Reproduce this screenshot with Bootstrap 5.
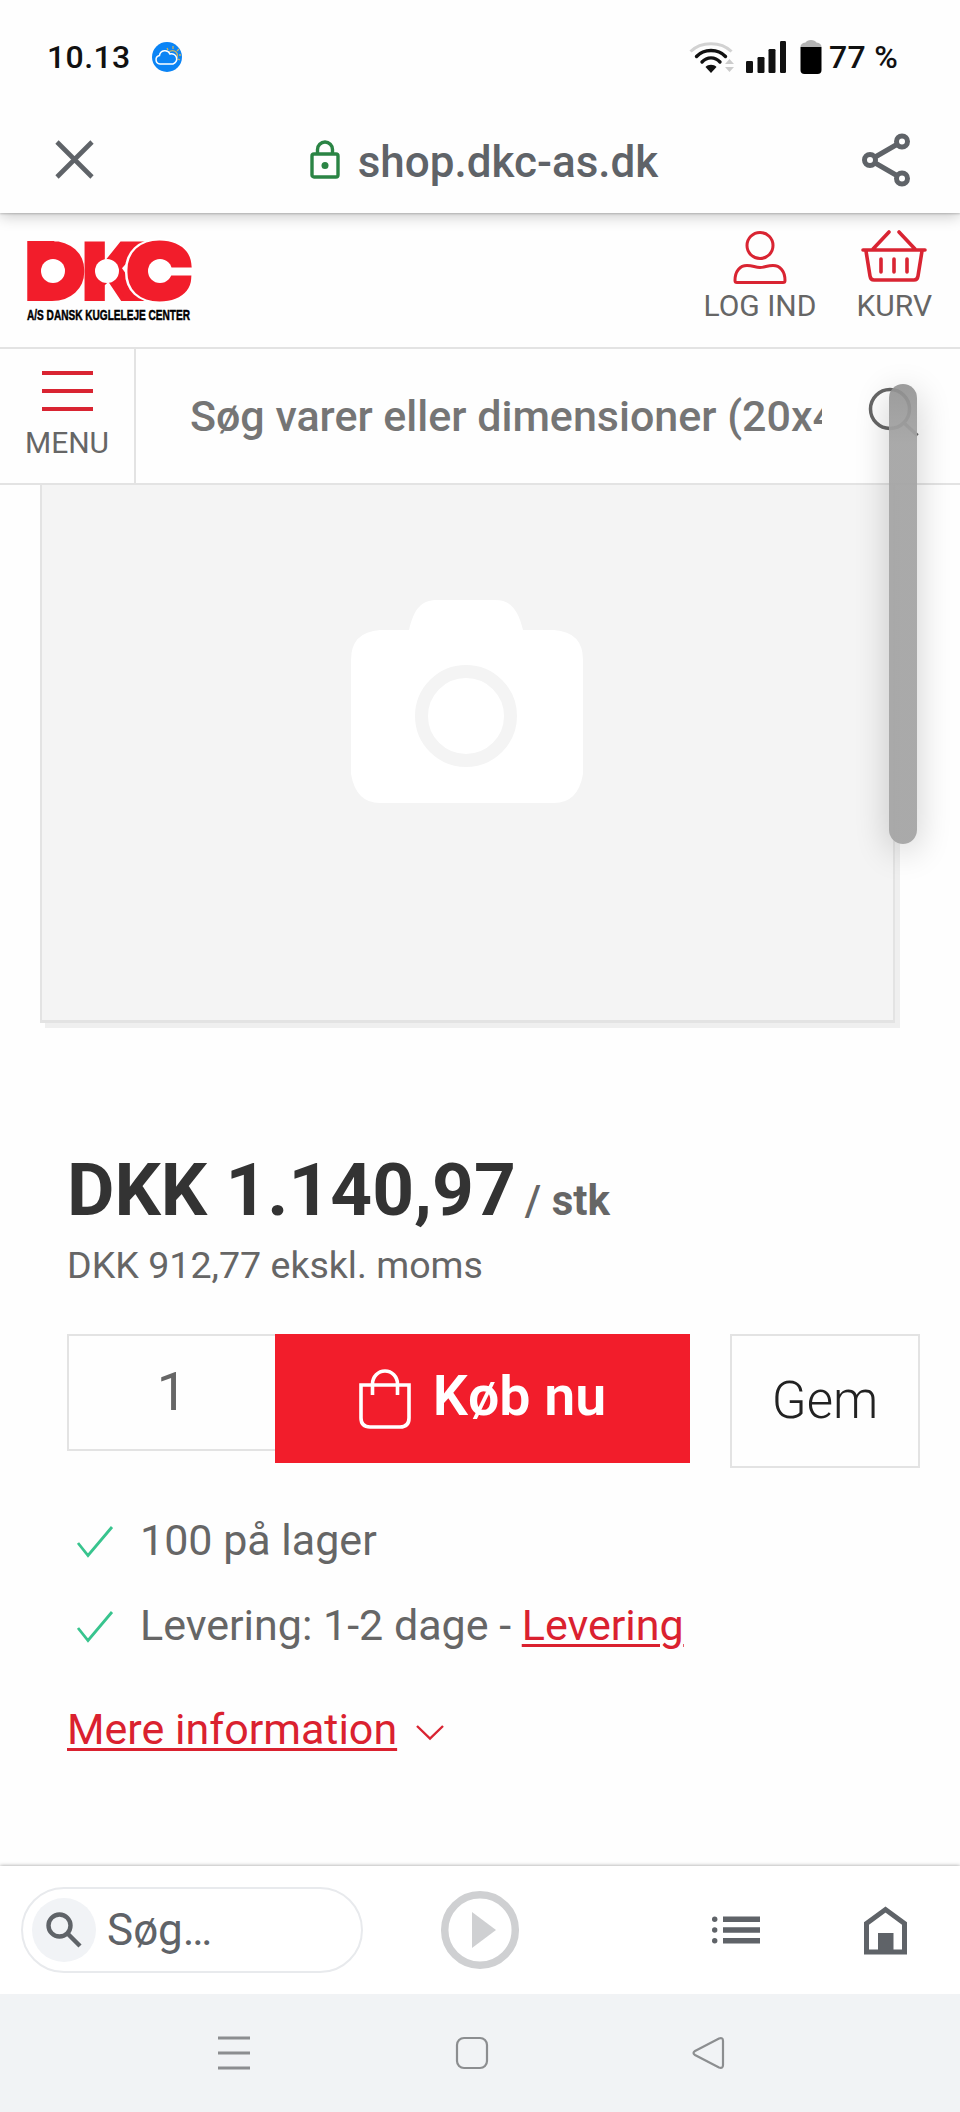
<!DOCTYPE html>
<html lang="da">
<head>
<meta charset="utf-8">
<meta name="viewport" content="width=device-width, initial-scale=1">
<title>shop.dkc-as.dk</title>
<link href="https://cdn.jsdelivr.net/npm/bootstrap@5.3.0/dist/css/bootstrap.min.css" rel="stylesheet">
<style>
body{font-family:Roboto,"Liberation Sans",sans-serif;line-height:1;color:#666;background:#fefefe}
.screen{width:960px;height:2112px}
svg{display:block;flex:none;overflow:visible}
.status{height:114px;padding:0 62px 0 47px;font-size:32px;font-weight:500;color:#111;background:#fefefe;z-index:4}
.clock{letter-spacing:.4px;width:105px}
.percent{margin-left:7px;letter-spacing:.3px}
.addr{height:99px;padding:0 49px 7px 55px;box-shadow:0 1px 2px rgba(0,0,0,.2),0 3px 14px rgba(0,0,0,.22);background:#fefefe;z-index:2}
.site{margin-left:12px}
.host{font-size:44px;font-weight:500;color:#5f6368;padding-top:4px;margin-left:18px}
.shop-head{height:136px;border-bottom:2px solid #e3e3e3;padding:0 28px 0 25px}
.act{font-size:30px;color:#666}
.act-top{padding-top:17px}
.act-top span{margin-top:7px;line-height:30px}
.find{height:136px;border-bottom:2px solid #e3e3e3}
.menu-cell{width:136px;border-right:2px solid #e3e3e3;padding-top:22px}
.bars{width:51px;height:40px;border-top:4px solid #d92432;border-bottom:4px solid #d92432;padding:14px 0}
.bars i{display:block;height:4px;background:#d92432}
.query{margin-left:54px;width:632px;height:54px;line-height:54px;font-size:43px;font-weight:500;color:#757575}
.photo{width:855px;height:538px;margin-left:40px;background:#f4f4f4;border:solid #e3e3e3;border-width:0 2px 3px;box-shadow:5px 5px 0 #efefef}
.info{padding:131px 39px 0 67px}
.price{font-size:73px;font-weight:700;color:#333}
.unit{font-size:42px;font-weight:500;color:#666;margin-left:9px}
.net{font-size:37.6px;margin-top:20px}
.buy{margin-top:49px;height:134px}
.qty{width:208px;height:117px;border:2px solid #e3e3e3;border-right:0;font-size:54px}
.kob{width:415px;height:129px;background:#f21d2b;color:#fff;font-size:55.5px;font-weight:600;border-radius:0}
.gem{width:190px;height:134px;border:2px solid #e3e3e3;font-size:51px;font-weight:300;color:#222;margin-left:40px}
.fact{font-size:43px;height:43px}
.tick{margin:3px 27px 0 10px}
.red-link{color:#da212f;text-decoration:underline;text-decoration-thickness:3px;text-underline-offset:4px}
.tools{height:128px;box-shadow:0 0 4px rgba(0,0,0,.4);background:#fff;padding:0 53px 0 21px}
.pill{width:342px;height:86px;border:2px solid #e8eaed;padding-left:9px;font-size:44px;color:#5f6368}
.lens{width:64px;height:64px;background:#f1f3f6}
.keys{height:118px;background:#f1f3f5}
.thumb-bar{position:absolute;left:889px;top:384px;width:28px;height:460px;border-radius:14px;background:linear-gradient(rgba(145,145,145,.9),rgba(165,165,165,.95) 60px);box-shadow:0 8px 34px rgba(0,0,0,.2);z-index:3}
</style>
</head>
<body>
<div class="screen d-flex flex-column position-relative overflow-hidden">
  <div class="status d-flex align-items-center position-relative">
    <span class="clock">10.13</span>
    <svg width="30" height="30" viewBox="0 0 30 30" fill="none"><circle cx="15" cy="15" r="15" fill="#0b84f5"/><g stroke="#c8b464" stroke-width="1.3"><path d="M17 10a4.800 4.800 0 1 1 7 7M16 8l-1-2M21 7V4M25 9l2-2M27 13h2M26 17l2 1"/></g><path d="M8 22a4.300 4.300 0 0 1-.5-8.500 5.500 5.500 0 0 1 10.500-1.500 5 5 0 0 1 3 10z" fill="#0b84f5" stroke="#fff" stroke-width="1.500"/></svg>
    <div class="d-flex align-items-center ms-auto">
      <svg width="46" height="34" viewBox="0 0 46 34" fill="none" stroke-width="3"><path d="M1.500 11.500C12 1 32 1 42.500 11.500" stroke="#d2d2d2"/><g stroke="#111" stroke-linecap="round"><path d="M7.500 16.500C15 8.500 29 8.500 36.500 16.500M13 22C18 16.500 26 16.500 31 22" stroke-width="3.400"/></g><path d="M16.500 27C19 24 25 24 27.500 27L22 33z" fill="#111"/><path d="M36 24h9l-4.500-5zM36 27h9l-4.500 5z" fill="#ccc"/></svg>
      <svg style="margin-left:9px" width="42" height="34" viewBox="0 0 42 34" fill="#111"><rect x="2" y="21" width="7" height="12" rx="1.200"/><rect x="13.500" y="17" width="7" height="16" rx="1.200"/><rect x="24.500" y="9" width="7" height="24" rx="1.200"/><rect x="36" y="1" width="6" height="32" rx="1.200"/></svg>
      <svg width="22" height="36" viewBox="0 0 22 36" style="margin-left:14px"><path d="M.5 8q0-4 5-4.500Q7 1 11 1t5.500 2.500q5 .5 5 4.500z" fill="#b4b4b4"/><path d="M.5 8h21v23q0 4-4 4h-13q-4 0-4-4z" fill="#000"/></svg>
      <span class="percent">77 %</span>
    </div>
  </div>
  <div class="addr d-flex align-items-center justify-content-between position-relative">
    <svg width="40" height="40" viewBox="0 0 40 40" stroke="#5f6368" stroke-width="4.600"><path d="M2 2l35 35M37 2L2 37"/></svg>
    <div class="site d-flex align-items-center">
      <svg width="30" height="40" viewBox="0 0 30 40" fill="none" stroke="#2a8444" stroke-width="3.400"><rect x="2" y="14" width="26" height="23" rx="2"/><path d="M7.500 14V9.500a7.500 7.500 0 0 1 15 0V14"/><circle cx="15" cy="25.500" r="3.500" fill="#2a8444" stroke="none"/></svg>
      <span class="host">shop.dkc-as.dk</span>
    </div>
    <svg width="50" height="56" viewBox="0 0 50 56" fill="none" stroke="#5f6368" stroke-width="5"><path d="M9 28L41 9.500M9 28l32 18.500"/><g fill="#fff"><circle cx="9" cy="28" r="5.500"/><circle cx="41" cy="9.500" r="5.500"/><circle cx="41" cy="46.500" r="5.500"/></g></svg>
  </div>
  <header class="shop-head d-flex">
    <svg width="168" height="84" viewBox="0 0 168 84" style="margin-top:26px" font-family="Roboto,sans-serif" font-weight="900">
      <g fill="#f21d2b" stroke="#f21d2b" stroke-width="12" stroke-miterlimit="3">
        <text x="5" y="56" font-size="67" textLength="50" lengthAdjust="spacingAndGlyphs">D</text>
        <text x="57" y="59.500" font-size="77" textLength="58" lengthAdjust="spacingAndGlyphs" stroke-width="4">K</text>
        <g font-size="67">
        <text x="107" y="56" textLength="54" lengthAdjust="spacingAndGlyphs" stroke="#fff" stroke-width="16">C</text>
        <text x="107" y="56" textLength="54" lengthAdjust="spacingAndGlyphs">C</text>
        </g>
      </g>
      <g fill="#fff"><circle cx="28" cy="32" r="12"/><circle cx="82" cy="32" r="12"/><circle cx="135" cy="32" r="12"/><rect x="143" y="28.500" width="25" height="8"/></g>
      <text x="2" y="81" font-family="'Liberation Sans Narrow','Liberation Sans',sans-serif" font-weight="700" font-size="15.500" textLength="163" lengthAdjust="spacingAndGlyphs" fill="#000" stroke="#000" stroke-width=".5">A/S DANSK KUGLELEJE CENTER</text>
    </svg>
    <div class="act act-top ms-auto d-flex flex-column align-items-center">
      <svg width="54" height="54" viewBox="0 0 54 54" fill="none" stroke="#d92432" stroke-width="3"><circle cx="27" cy="15.500" r="13"/><path d="M4 52.500q-2 0-2-2C2 41 7 35.500 14 35.500c6 0 8 2 13 2s7-2 13-2c7 0 12 5.500 12 15q0 2-2 2z"/></svg>
      <span>LOG IND</span>
    </div>
    <div class="act act-top d-flex flex-column align-items-center" style="margin-left:40px">
      <svg width="66" height="54" viewBox="0 0 66 54" fill="none" stroke="#d92432" stroke-width="3.600" stroke-linecap="round"><path d="M2 20h62M12 19L28 2M54 19L38 2M5 21l4 25q.6 4 4 4h40q3.400 0 4-4l4-25M20 29v13M33 29v13M46 29v13"/></svg>
      <span>KURV</span>
    </div>
  </header>
  <div class="find d-flex">
    <div class="menu-cell d-flex flex-column align-items-center">
      <div class="bars"><i></i></div>
      <span class="act" style="margin-top:17px">MENU</span>
    </div>
    <div class="query overflow-hidden text-nowrap align-self-center">Søg varer eller dimensioner (20x4</div>
    <svg width="54" height="54" viewBox="0 0 54 54" style="margin:37px 0 0 46px" fill="none" stroke="#666" stroke-width="3.500"><circle cx="22" cy="23" r="19.500"/><path d="M36 37l13.500 12.500"/></svg>
  </div>
  <div class="photo flex-shrink-0">
    <svg width="234" height="206" viewBox="0 0 234 206" style="margin:114px 0 0 308px"><path d="M30 31h29C64 10 71 1 87 1h58c15 0 23 9 28 30h31q29 2 29 30v114q-5 29-29 29H30q-24 0-29-29V61q0-28 29-30z" fill="#fff"/><circle cx="116" cy="117" r="44.500" fill="none" stroke="#f4f4f4" stroke-width="13"/></svg>
  </div>
  <main class="info flex-grow-1">
    <div class="d-flex align-items-baseline"><span class="price">DKK 1.140,97</span><span class="unit">/ <b>stk</b></span></div>
    <div class="net">DKK 912,77 ekskl. moms</div>
    <div class="buy d-flex align-items-start">
      <div class="qty d-flex align-items-center justify-content-center">1</div>
      <button class="kob btn p-0 border-0 d-flex align-items-center justify-content-center" type="button">
        <svg width="52" height="60" viewBox="0 0 52 60" fill="none" stroke="#fff" stroke-width="3.600"><path d="M2 17h48v33q0 9-9 9H11q-9 0-9-9zM13.500 27V16a12.500 13 0 0 1 25 0v11"/></svg>
        <span style="margin-left:22px;margin-top:-3px">Køb nu</span>
      </button>
      <div class="gem d-flex align-items-center justify-content-center">Gem</div>
    </div>
    <div class="fact d-flex align-items-center" style="margin-top:51px"><svg class="tick" width="36" height="34" viewBox="0 0 36 34" fill="none" stroke="#38c48e" stroke-width="2.800"><path d="M1 18l10 12.500L35 2"/></svg>100 på lager</div>
    <div class="fact d-flex align-items-center" style="margin-top:42px"><svg class="tick" width="36" height="34" viewBox="0 0 36 34" fill="none" stroke="#38c48e" stroke-width="2.800"><path d="M1 18l10 12.500L35 2"/></svg><span>Levering: 1-2 dage - <a class="red-link" href="#">Levering</a></span></div>
    <div class="fact d-flex align-items-center" style="margin-top:61px"><a class="red-link" href="#">Mere information</a><svg width="28" height="16" viewBox="0 0 28 16" style="margin:7px 0 0 19px" fill="none" stroke="#d92432" stroke-width="2.400"><path d="M1 1l13 12.500L27 1"/></svg></div>
  </main>
  <div class="tools d-flex align-items-center flex-shrink-0">
    <div class="pill rounded-pill d-flex align-items-center">
      <span class="lens rounded-circle d-flex align-items-center justify-content-center"><svg width="36" height="36" viewBox="0 0 36 36" fill="none" stroke="#5f6368" stroke-width="4.400"><circle cx="13.500" cy="13.500" r="11"/><path d="M21.500 21.500L34 34"/></svg></span>
      <span style="margin-left:11px">Søg…</span>
    </div>
    <svg width="80" height="80" viewBox="0 0 80 80" style="margin-left:77px"><circle cx="40" cy="40" r="35.300" fill="none" stroke="#cfd0d2" stroke-width="7.500"/><path d="M32 22l24 18-24 18z" fill="#cfd0d2"/></svg>
    <svg width="48" height="28" viewBox="0 0 48 28" class="ms-auto" fill="#5f6368"><circle cx="2.700" cy="3.200" r="2.700"/><circle cx="2.700" cy="14" r="2.700"/><circle cx="2.700" cy="24.800" r="2.700"/><path d="M11 .5h37v5.500H11zM11 11.300h37v5.500H11zM11 22h37v5.500H11z"/></svg>
    <svg width="43" height="49" viewBox="0 0 43 49" style="margin-left:104px"><path d="M2.500 17.500L21.500 3.500 40.500 17.500V46h-38z" fill="none" stroke="#5f6368" stroke-width="5"/><path d="M14 27h15.500v20H14z" fill="#5f6368"/></svg>
  </div>
  <div class="keys d-flex align-items-center flex-shrink-0">
    <svg width="32" height="34" viewBox="0 0 32 34" style="margin-left:218px" stroke="#8c8e90" stroke-width="2.800"><path d="M0 2h32M0 17h32M0 32h32"/></svg>
    <svg width="34" height="34" viewBox="0 0 34 34" style="margin-left:205px" fill="none" stroke="#8c8e90" stroke-width="2.200"><rect x="2" y="2" width="30" height="30" rx="7"/></svg>
    <svg width="34" height="34" viewBox="0 0 34 34" style="margin-left:203px" fill="none" stroke="#8c8e90" stroke-width="2.200"><path d="M3 15L27 2.500q4-1.500 4 2.500v24q0 4-4 2.500L3 19q-3-2 0-4z"/></svg>
  </div>
  <div class="thumb-bar"></div>
</div>
<script src="https://cdn.jsdelivr.net/npm/bootstrap@5.3.0/dist/js/bootstrap.bundle.min.js"></script>
</body>
</html>
